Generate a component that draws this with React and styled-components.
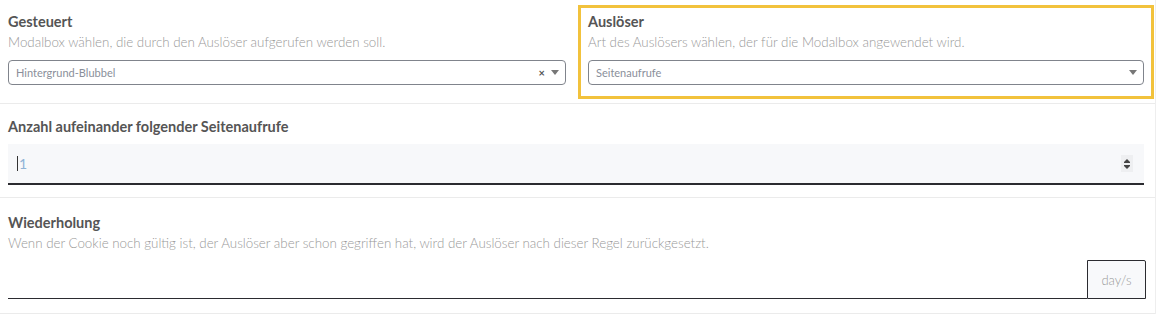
import styled, { createGlobalStyle } from "styled-components";

const Global = createGlobalStyle`
    body { margin: 0; background: #fff; font-family: Lato, "Open Sans", sans-serif; overflow: hidden; }
`;

const Page = styled.div`
    width: 1156px;
    border-right: 1px solid #eee;
    box-sizing: border-box;
`;

const Row = styled.div`
    display: ${p => p.$split ? "grid" : "block"};
    grid-template-columns: 576px 1fr;
    border-bottom: 1px solid #ebebeb;
`;

const Col = styled.div`
    border: 3px solid ${p => p.$active ? "#f2c23c" : "transparent"};
    margin: ${p => p.$active ? "5px 1px 4px 2px" : "5px 0 4px -3px"};
    padding: ${p => p.$active ? "4px 7px 11px 7px" : "4px 7px 11px 8px"};
`;

const Title = styled.div`
    font-size: 14.5px;
    font-weight: 700;
    color: #555;
    line-height: 20px;
`;

const Desc = styled.div`
    font-size: 13.35px;
    font-weight: 300;
    color: #999;
    line-height: 19px;
    margin-top: 1px;
`;

const Select = styled.div`
    display: flex;
    align-items: center;
    height: 25px;
    margin-top: 8px;
    border: 1px solid #80848c;
    border-radius: 4px;
    padding: 0 6px 0 7px;
    box-sizing: border-box;
    font-size: 11px;
    color: #8a8f9a;
`;

const SelectText = styled.span`
    flex: 1;
`;

const Clear = styled.span`
    font-size: 11px;
    font-weight: 700;
    color: #555;
    margin-right: 6px;
`;

const Arrow = styled.span`
    width: 0; height: 0;
    border-left: 4px solid transparent;
    border-right: 4px solid transparent;
    border-top: 5px solid #777;
`;

const NumberBox = styled.div`
    display: flex;
    align-items: center;
    height: 39px;
    margin-top: 7px;
    background: #f7f8fa;
    border-bottom: 2px solid #2b2b30;
    padding: 0 11px 0 9px;
    font-size: 14px;
    color: #8fb3d6;
`;

const Caret = styled.span`
    width: 1px;
    height: 15px;
    background: #333;
    margin-right: 1px;
`;

const Spin = styled.svg`
    margin-left: auto;
    width: 12px;
    height: 17px;
    background: #eeeff1;
`;

const Pad = styled.div`
    padding: ${p => p.$p};
`;

const InputGroup = styled.div`
    display: flex;
    height: 39px;
    margin-top: 7px;
    align-items: stretch;
`;

const Line = styled.div`
    flex: 1;
    border-bottom: 1px solid #2b2b30;
`;

const Addon = styled.div`
    width: 57px;
    display: flex;
    align-items: center;
    justify-content: center;
    border: 1px solid #2b2b30;
    border-top-right-radius: 2px;
    background: #f8f9fb;
    font-size: 13px;
    font-weight: 300;
    color: #999;
`;

export default function App() {
    return (
        <Page>
            <Global />
            <Row $split>
                <Col>
                    <Title>Gesteuert</Title>
                    <Desc>Modalbox wählen, die durch den Auslöser aufgerufen werden soll.</Desc>
                    <Select>
                        <SelectText>Hintergrund-Blubbel</SelectText>
                        <Clear>×</Clear>
                        <Arrow />
                    </Select>
                </Col>
                <Col $active>
                    <Title>Auslöser</Title>
                    <Desc>Art des Auslösers wählen, der für die Modalbox angewendet wird.</Desc>
                    <Select>
                        <SelectText>Seitenaufrufe</SelectText>
                        <Arrow />
                    </Select>
                </Col>
            </Row>
            <Row>
                <Pad $p="13px 11px 12px 8px">
                    <Title>Anzahl aufeinander folgender Seitenaufrufe</Title>
                    <NumberBox>
                        <Caret />1
                        <Spin viewBox="0 0 12 17">
                            <path d="M6 4 L9 7 L3 7 Z" fill="#444" />
                            <rect x="3" y="7" width="6" height="1" fill="#444" />
                            <rect x="3" y="10" width="6" height="1" fill="#444" />
                            <path d="M3 11 L9 11 L6 14 Z" fill="#444" />
                        </Spin>
                    </NumberBox>
                </Pad>
            </Row>
            <Row>
                <Pad $p="15px 9px 14px 8px">
                    <Title>Wiederholung</Title>
                    <Desc>Wenn der Cookie noch gültig ist, der Auslöser aber schon gegriffen hat, wird der Auslöser nach dieser Regel zurückgesetzt.</Desc>
                    <InputGroup>
                        <Line />
                        <Addon>day/s</Addon>
                    </InputGroup>
                </Pad>
            </Row>
        </Page>
    );
}
